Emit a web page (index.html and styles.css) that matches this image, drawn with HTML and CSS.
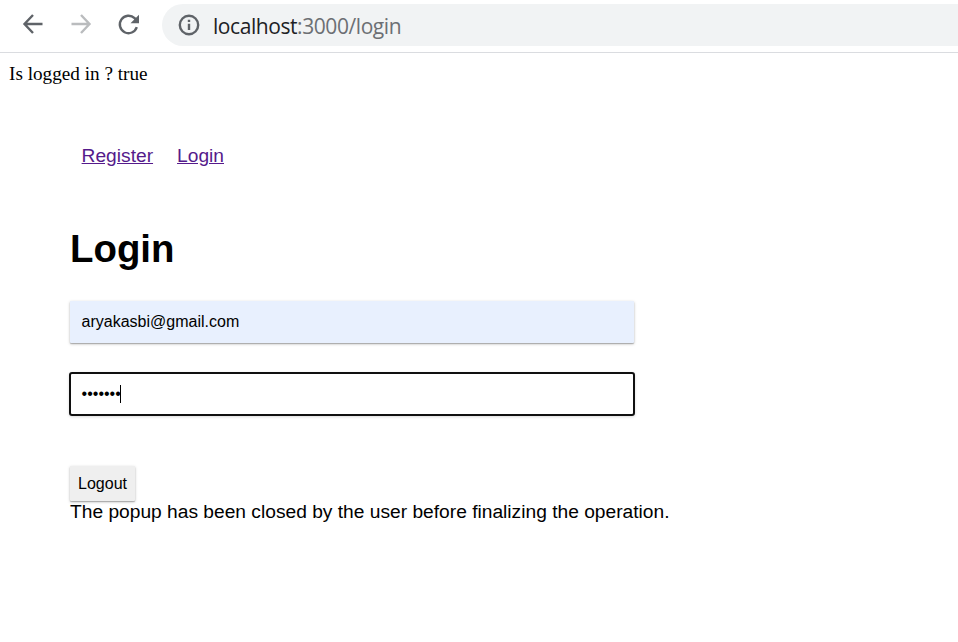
FILE: index.html
```html
<!DOCTYPE html>
<html lang="en">
<head>
<meta charset="utf-8">
<title>Login</title>
<link rel="stylesheet" href="styles.css">
</head>
<body>
<header class="toolbar">
  <svg class="icon" viewBox="0 0 24 24"><path d="M21.500 11H4M12 2L3.500 11l8.500 9"/></svg>
  <svg class="icon muted" viewBox="0 0 24 24"><path d="M2.500 11H20.500M12 2l8.500 9-8.500 9"/></svg>
  <svg class="icon" viewBox="0 0 24 24"><path d="M19.800 14.200A8.700 8.700 0 1 1 17.600 5.200L19.500 7.200"/><path class="solid" d="M22 1.800v8.400h-8.500z"/></svg>
  <div class="address">
    <svg class="info" viewBox="0 0 22 22"><circle cx="11" cy="11" r="9.200"/><path d="M11 9.800v6.200M11 5.800v2.300"/></svg>
    <span class="url">localhost<span class="path">:3000/login</span></span>
  </div>
</header>
<p class="status">Is logged in ? true</p>
<main class="content">
  <nav class="links"><a href="#">Register</a><a href="#">Login</a></nav>
  <h1>Login</h1>
  <div class="field email">aryakasbi@gmail.com</div>
  <div class="field password"><span class="dots">•••••••</span><span class="caret"></span></div>
  <button class="logout">Logout</button>
  <p class="message">The popup has been closed by the user before finalizing the operation.</p>
</main>
</body>
</html>
```
FILE: styles.css
```css
* { box-sizing: border-box; }
body { margin: 0; background: #fff; color: #000; font-family: "Liberation Sans", Arial, sans-serif; overflow: hidden; }
.toolbar { height: 53px; display: flex; align-items: flex-start; padding: 4px 0 0 21px; border-bottom: 1px solid #dadce0; }
.icon { width: 24px; height: 24px; margin: 9px 24px 0 0; fill: none; stroke: #5f6368; stroke-width: 2.400; }
.icon.muted { stroke: #babcbe; }
.icon .solid { fill: #5f6368; stroke: none; }
.address { flex: 1; height: 42px; margin-left: -3px; border-radius: 21px 0 0 21px; background: #f1f3f4; display: flex; align-items: center; padding-left: 16px; }
.info { width: 22px; height: 22px; margin-right: 13px; fill: none; stroke: #5f6368; stroke-width: 2.400; }
.url { font: 21px/30px "Open Sans", sans-serif; letter-spacing: -0.430px; color: #202124; padding-top: 1px; }
.path { color: #6c6f73; }
.status { margin: 10px 0 0 9px; font: 19.200px/21px "Liberation Serif", serif; }
.content { padding: 61px 0 0 70px; }
.links { display: flex; gap: 24px; padding-left: 11.600px; font-size: 19.200px; line-height: 22px; }
.links a { color: #551a8b; }
h1 { margin: 60px 0 0; font-size: 38.400px; line-height: 44px; }
.field { display: flex; align-items: center; font-size: 16px; }
.email { width: 564px; height: 42px; padding-left: 11.600px; margin-top: 30px; background: #e8f0fe; border-radius: 1px; box-shadow: 0 1px 3px rgba(0,0,0,.25), 0 1px 1px rgba(0,0,0,.2); }
.password { width: 566px; height: 44px; margin: 29px 0 0 -1px; border: 2px solid #101010; border-radius: 3px; padding-left: 10.600px; padding-bottom: 1px; box-shadow: 0 1px 3px rgba(0,0,0,.15); }
.caret { width: 1px; height: 18px; margin-left: -1px; background: #000; }
.logout { display: block; width: 65px; height: 35px; margin-top: 50px; padding: 0; border: 0; background: #efefef; border-radius: 1px; box-shadow: 0 1px 3px rgba(0,0,0,.25), 0 1px 1px rgba(0,0,0,.2); font: 16px "Liberation Sans", sans-serif; }
.message { margin: 0; font-size: 19.200px; line-height: 22px; }
```
